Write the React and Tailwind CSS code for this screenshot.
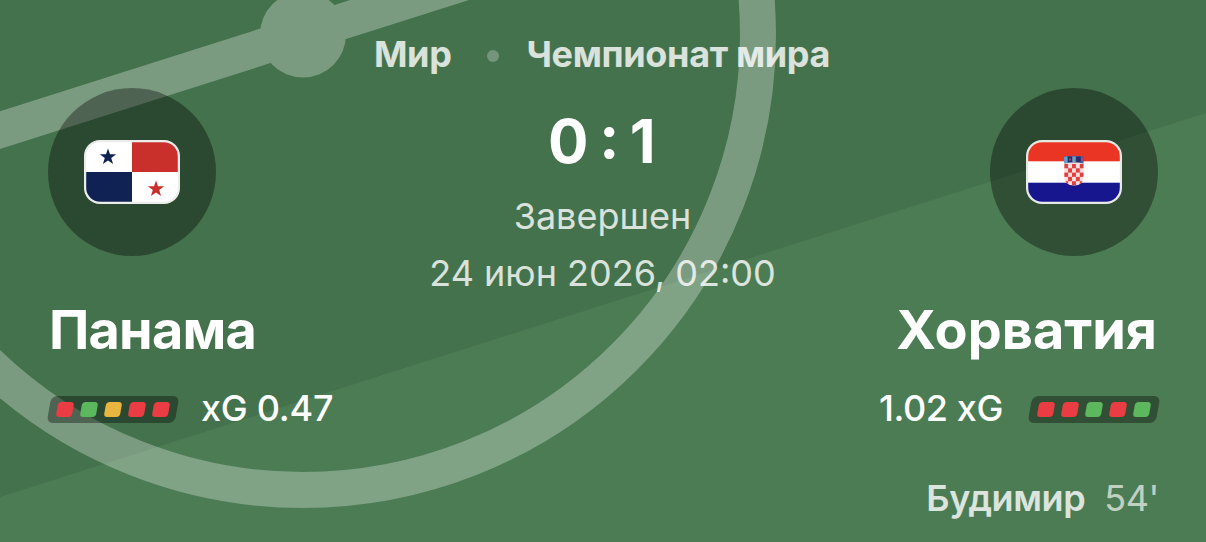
import React from "react";

const RESULT_COLORS = {
  win: "bg-[#5cb85c]",
  draw: "bg-[#e8b53f]",
  loss: "bg-[#e93d43]",
};

const STAR =
  "M0,-8.6 L2,-2.7 L8.2,-2.7 L3.2,1 L5.1,7 L0,3.4 L-5.1,7 L-3.2,1 L-8.2,-2.7 L-2,-2.7 Z";

function Pitch() {
  return (
    <svg
      className="absolute inset-0 h-full w-full"
      viewBox="0 0 1206 542"
      preserveAspectRatio="none"
      aria-hidden="true"
    >
      <path d="M0 497 L1206 113 V542 H0 Z" fill="#4c7c54" />
      <g opacity="0.29" fill="none" stroke="#fff" strokeWidth="36">
        <circle cx="303" cy="35" r="455" />
        <path d="M-60 149.2 L600 -60.5" />
        <circle cx="303" cy="34.5" r="43" fill="#fff" stroke="none" />
      </g>
    </svg>
  );
}

function PanamaFlag() {
  return (
    <svg className="h-16 w-24" viewBox="0 0 96 64">
      <clipPath id="panama">
        <rect x="2.2" y="2.2" width="91.6" height="59.6" rx="14" />
      </clipPath>
      <rect width="96" height="64" rx="16" fill="#fff" fillOpacity="0.9" />
      <g clipPath="url(#panama)">
        <rect width="96" height="64" fill="#fff" />
        <rect x="48" width="48" height="32" fill="#c9302c" />
        <rect y="32" width="48" height="32" fill="#102153" />
        <path d={STAR} transform="translate(24 17)" fill="#102153" />
        <path d={STAR} transform="translate(72 49)" fill="#c9302c" />
      </g>
    </svg>
  );
}

function CroatiaFlag() {
  const checks = [];
  for (let r = 0; r < 5; r++) {
    for (let c = 0; c < 5; c++) {
      if ((r + c) % 2 === 0) {
        checks.push(
          <rect key={`${r}-${c}`} x={38.2 + c * 3.9} y={24 + r * 4.3} width="3.9" height="4.3" fill="#e23d40" />
        );
      }
    }
  }
  return (
    <svg className="h-16 w-24" viewBox="0 0 96 64">
      <clipPath id="croatia">
        <rect x="2.2" y="2.2" width="91.6" height="59.6" rx="14" />
      </clipPath>
      <clipPath id="shield">
        <path d="M38.2 22 H57.7 V36 Q57.7 45.5 48 45.5 Q38.2 45.5 38.2 36 Z" />
      </clipPath>
      <rect width="96" height="64" rx="16" fill="#fff" fillOpacity="0.88" />
      <g clipPath="url(#croatia)">
        <rect width="96" height="64" fill="#fff" />
        <rect width="96" height="21.3" fill="#ea3524" />
        <rect y="42.7" width="96" height="22" fill="#17168f" />
      </g>
      <g clipPath="url(#shield)">
        <rect x="38" y="22" width="20" height="24" fill="#f9dedc" />
        {checks}
      </g>
      <path d="M37.8 17 L41 16 L44.5 16.6 L48 15.4 L51.5 16.6 L55 16 L58.2 17 L57.4 23.5 Q48 21.6 38.6 23.5 Z" fill="#4a5f9d" />
      <path d="M38 17.2 L41 16.3 L41.6 22.8 L38.6 23.3 Z" fill="#5aa6cf" />
      <path d="M42 16.6 h4 v5.4 h-4 Z M50.2 16.4 h4.6 v5.6 h-4.6 Z" fill="#2b2c70" />
      <path d="M46.5 16.5 h3 v5.5 h-3 Z" fill="#6fa0b8" />
      <path d="M43.2 18.5 h1.6 v2 h-1.6 Z M55.4 18 h1.5 v3 h-1.5 Z" fill="#b34a68" />
    </svg>
  );
}

function Emblem({ children }) {
  return (
    <div className="flex size-[168px] items-center justify-center rounded-full bg-black/36">
      {children}
    </div>
  );
}

function Form({ results }) {
  return (
    <div className="flex h-[27px] w-32 -skew-x-[10deg] items-center justify-center gap-2 rounded-[6px] bg-black/36">
      {results.map((r, i) => (
        <span key={i} className={`h-[15px] w-4 rounded-[3.5px] ${RESULT_COLORS[r]}`} />
      ))}
    </div>
  );
}

export default function App() {
  return (
    <main className="relative h-[542px] w-[1206px] overflow-hidden bg-[#44724c] font-['Inter',sans-serif] text-white">
      <Pitch />
      <div className="relative flex h-full flex-col px-12">
        <section className="flex h-[300px] justify-between">
          <div className="pt-[88px]">
            <Emblem>
              <PanamaFlag />
            </Emblem>
          </div>
          <div className="flex flex-col items-center pt-[30px] text-4xl/[48px]">
            <div className="flex items-center pr-[2px] font-bold tracking-[-0.35px] text-white/80">
              <span>Мир</span>
              <span className="mr-[27px] ml-9 mt-1 size-3 rounded-full bg-white/25" />
              <span>Чемпионат мира</span>
            </div>
            <div className="mt-[27px] flex whitespace-pre pr-1 text-[60px]/[72px] font-bold tracking-[-1.8px] text-white">
              <span>0 </span>
              <span className="-mt-[5px]">:</span>
              <span> 1</span>
            </div>
            <div className="mt-[15px] pr-px text-white/80">Завершен</div>
            <div className="mt-[9px] pr-px text-white/80">24 июн 2026, 02:00</div>
          </div>
          <div className="pt-[88px]">
            <Emblem>
              <CroatiaFlag />
            </Emblem>
          </div>
        </section>
        <section className="flex h-[60px] items-center justify-between text-[54px]/[60px] font-bold">
          <h2 className="pl-px tracking-[-0.8px]">Панама</h2>
          <h2 className="pr-px">Хорватия</h2>
        </section>
        <section className="mt-[24px] flex h-[50px] items-center justify-between text-4xl/[48px] font-medium">
          <div className="flex items-center gap-6 pl-px">
            <Form results={["loss", "win", "draw", "loss", "loss"]} />
            <span className="-mt-0.5 tracking-[-0.25px]">xG 0.47</span>
          </div>
          <div className="flex items-center gap-[27px]">
            <span className="-mt-0.5 tracking-[-0.4px]">1.02 xG</span>
            <Form results={["loss", "loss", "win", "loss", "win"]} />
          </div>
        </section>
        <section className="-mr-px mt-[40px] flex h-[48px] items-center justify-end gap-[19px] text-4xl/[48px] tracking-[-0.4px]">
          <span className="font-semibold text-white/80">Будимир</span>
          <span className="text-white/65">54'</span>
        </section>
      </div>
    </main>
  );
}
